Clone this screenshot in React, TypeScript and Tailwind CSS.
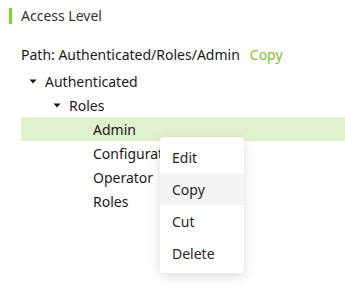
import React from 'react';

type Node = { label: string; level: number; expanded?: boolean; selected?: boolean };

const nodes: Node[] = [
  { label: 'Authenticated', level: 0, expanded: true },
  { label: 'Roles', level: 1, expanded: true },
  { label: 'Admin', level: 2, selected: true },
  { label: 'Configuration', level: 2 },
  { label: 'Operator', level: 2 },
  { label: 'Roles', level: 2 },
];

const Caret = () => (
  <svg width="8" height="5" viewBox="0 0 8 5">
    <path d="M0.5 0.5 L7.5 0.5 L4 4.5 Z" fill="#111" />
  </svg>
);

export default function App() {
  return (
    <div className="relative w-[345px] h-[287px] bg-white overflow-hidden text-[14px] text-[#1a1a1a]" style={{ fontFamily: '"Noto Sans", sans-serif' }}>
      <div className="flex items-center h-4 mt-2 ml-[9px]">
        <div className="w-[3px] h-4 bg-[#7ed321]" />
        <span className="ml-[9px] leading-4 text-[#333]">Access Level</span>
      </div>
      <div className="pl-[21px] mt-[21px] h-[20px] leading-[20px] flex">
        <span>Path: Authenticated/Roles/Admin</span>
        <span className="ml-[10px] text-[#7cc41f]">Copy</span>
      </div>
      <div className="mt-[4px] ml-[21px]">
        {nodes.map((n, i) => (
          <div key={i} className={`flex items-center h-6 ${n.selected ? 'bg-[#dff2cc]' : ''}`}>
            <div className="flex shrink-0" style={{ width: n.level * 24 }} />
            <div className="w-6 h-6 flex items-center justify-center shrink-0">
              {n.expanded ? <Caret /> : null}
            </div>
            <span className="whitespace-nowrap">{n.label}</span>
          </div>
        ))}
      </div>
      <div className="absolute left-[160px] top-[137px] w-[84px] py-1 bg-white rounded shadow-[0_3px_12px_rgba(0,0,0,0.14)]">
        {['Edit', 'Copy', 'Cut', 'Delete'].map(item => (
          <div key={item} className={`h-8 flex items-center pl-3 text-[#262626] ${item === 'Copy' ? 'bg-[#f5f5f5]' : ''}`}>
            {item}
          </div>
        ))}
      </div>
    </div>
  );
}
